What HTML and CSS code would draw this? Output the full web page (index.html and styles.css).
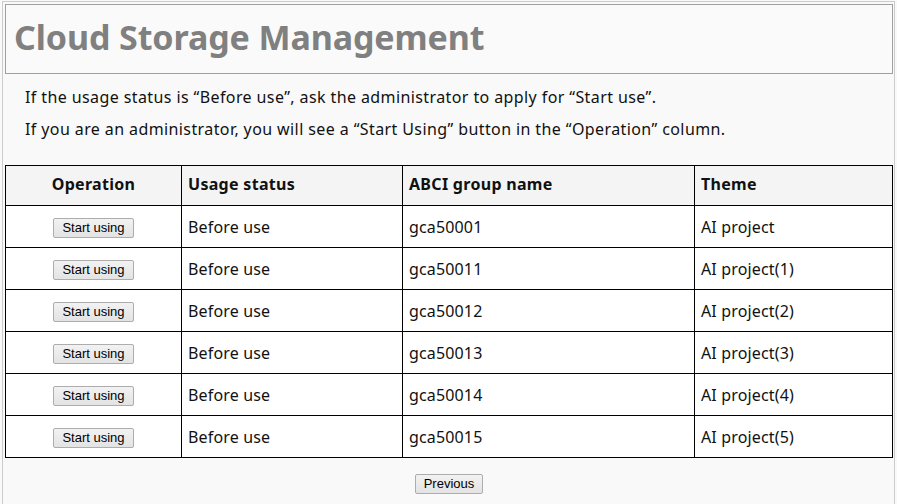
FILE: index.html
```html
<!DOCTYPE html>
<html>
<head>
<meta charset="utf-8">
<link rel="stylesheet" href="styles.css">
</head>
<body>
<div class="page">
  <div class="header"><h1 class="title">Cloud Storage Management</h1></div>
  <div class="notes">
    <p>If the usage status is “Before use”, ask the administrator to apply for “Start use”.</p>
    <p>If you are an administrator, you will see a “Start Using” button in the “Operation” column.</p>
  </div>
  <table class="grid">
    <colgroup><col class="w-op"><col class="w-st"><col class="w-gr"><col class="w-th"></colgroup>
    <thead>
      <tr><th class="c-op">Operation</th><th>Usage status</th><th>ABCI group name</th><th>Theme</th></tr>
    </thead>
    <tbody>
      <tr><td class="op"><button class="btn">Start using</button></td><td>Before use</td><td>gca50001</td><td>AI project</td></tr>
      <tr><td class="op"><button class="btn">Start using</button></td><td>Before use</td><td>gca50011</td><td>AI project(1)</td></tr>
      <tr><td class="op"><button class="btn">Start using</button></td><td>Before use</td><td>gca50012</td><td>AI project(2)</td></tr>
      <tr><td class="op"><button class="btn">Start using</button></td><td>Before use</td><td>gca50013</td><td>AI project(3)</td></tr>
      <tr><td class="op"><button class="btn">Start using</button></td><td>Before use</td><td>gca50014</td><td>AI project(4)</td></tr>
      <tr><td class="op"><button class="btn">Start using</button></td><td>Before use</td><td>gca50015</td><td>AI project(5)</td></tr>
    </tbody>
  </table>
  <div class="pager"><button class="btn">Previous</button></div>
</div>
</body>
</html>
```
FILE: styles.css
```css
html, body {
  margin: 0;
  padding: 0;
  background: #f9f9f9;
}
body {
  font-family: "Noto Sans", "DejaVu Sans", sans-serif;
  color: #111;
}
.page {
  margin: 1px 2px 0 2px;
  border: 1px solid #cccccc;
  border-bottom: none;
  padding: 2px 1px 0 2px;
  height: 520px;
  box-sizing: border-box;
}
.header {
  border: 1px solid #a0a0a0;
  background: #fafafa;
  height: 70px;
  box-sizing: border-box;
  display: flex;
  align-items: center;
  padding: 0 0 4px 8px;
}
.title {
  margin: 0;
  font-size: 34px;
  font-weight: bold;
  color: #808080;
  letter-spacing: -0.1px;
}
.notes {
  padding: 7px 0 0 20px;
  height: 91px;
  box-sizing: border-box;
}
.notes p {
  margin: 0;
  font-size: 16px;
  line-height: 32px;
  letter-spacing: 0.4px;
}
.grid {
  width: 887px;
  table-layout: fixed;
  border-collapse: collapse;
  font-size: 16px;
  letter-spacing: 0.15px;
}
.w-op { width: 176px; }
.w-st { width: 221px; }
.w-gr { width: 292px; }
.w-th { width: 198px; }
.grid th, .grid td {
  border: 1px solid #000;
  text-align: left;
  padding: 0 0 0 6px;
}
.grid th {
  background: #f4f4f4;
  height: 36px;
  font-weight: bold;
  letter-spacing: 0.3px;
  padding-bottom: 3px;
}
.grid td {
  background: #fff;
  height: 41px;
}
.grid th.c-op { text-align: center; padding: 0 0 3px 0; }
.grid td.op { text-align: center; padding: 0; }
.btn {
  font-family: "Liberation Sans", Arial, sans-serif;
  font-size: 13px;
  letter-spacing: 0;
  color: #000;
  height: 20px;
  padding: 0 8px;
  border: 1px solid #adadad;
  border-radius: 2px;
  background: linear-gradient(#f2f2f2, #e3e3e3);
  line-height: 18px;
}
.pager {
  display: flex;
  justify-content: center;
  padding-top: 16px;
}
```
